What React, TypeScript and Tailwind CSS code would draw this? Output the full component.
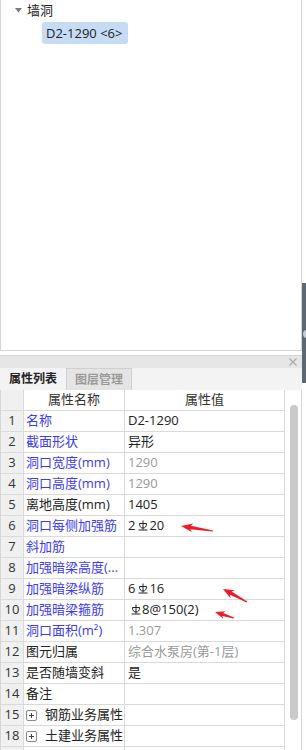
import React from "react";

const FONT = { fontFamily: '"Open Sans", "Noto Sans CJK SC", sans-serif' };

function Rebar() {
  return (
    <svg width="10" height="11" viewBox="0 0 10 11" className="inline-block align-[-1px] ml-[3px] mr-[1px]">
      <g fill="none" stroke="#222" strokeWidth="1">
        <path d="M1.5 3.5 H8.5" />
        <path d="M1.5 3.5 Q1.5 8 5 8 Q8.5 8 8.5 3.5" />
        <path d="M5 0.5 V9.5" />
        <path d="M0.5 10 H9.5" />
      </g>
    </svg>
  );
}

function PlusBox() {
  return (
    <svg width="11" height="11" viewBox="0 0 11 11" className="shrink-0">
      <rect x="0.5" y="0.5" width="10" height="10" rx="1.5" fill="white" stroke="#8a8a8a" />
      <path d="M3 5.5 H8 M5.5 3 V8" stroke="#444" strokeWidth="1" />
    </svg>
  );
}

type Row = {
  n: string;
  name: React.ReactNode;
  blue?: boolean;
  value?: React.ReactNode;
  gray?: boolean;
  plus?: boolean;
};

const rows: Row[] = [
  { n: "1", name: "名称", blue: true, value: "D2-1290" },
  { n: "2", name: "截面形状", blue: true, value: "异形" },
  { n: "3", name: "洞口宽度(mm)", blue: true, value: "1290", gray: true },
  { n: "4", name: "洞口高度(mm)", blue: true, value: "1290", gray: true },
  { n: "5", name: "离地高度(mm)", value: "1405" },
  { n: "6", name: "洞口每侧加强筋", blue: true, value: (<span>2<Rebar />20</span>) },
  { n: "7", name: "斜加筋", blue: true },
  { n: "8", name: "加强暗梁高度(...", blue: true },
  { n: "9", name: "加强暗梁纵筋", blue: true, value: (<span>6<Rebar />16</span>) },
  { n: "10", name: "加强暗梁箍筋", blue: true, value: (<span><Rebar />8@150(2)</span>) },
  { n: "11", name: (<span>洞口面积(m²)</span>), blue: true, value: "1.307", gray: true },
  { n: "12", name: "图元归属", value: "综合水泵房(第-1层)", gray: true },
  { n: "13", name: "是否随墙变斜", value: "是" },
  { n: "14", name: "备注" },
  { n: "15", name: "钢筋业务属性", plus: true },
  { n: "18", name: "土建业务属性", plus: true },
  { n: "", name: "" },
];

function arrowPoints(tip: [number, number], tail: [number, number], headLen: number, headW: number, tailW: number) {
  const dx = tail[0] - tip[0];
  const dy = tail[1] - tip[1];
  const len = Math.hypot(dx, dy);
  const ux = dx / len;
  const uy = dy / len;
  const px = -uy;
  const py = ux;
  const p = (d: number, w: number) => `${(tip[0] + ux * d + px * w).toFixed(2)},${(tip[1] + uy * d + py * w).toFixed(2)}`;
  return [
    p(0, 0),
    p(headLen, headW),
    p(headLen * 0.8, tailW),
    p(len, tailW * 0.35),
    p(len, -tailW * 0.35),
    p(headLen * 0.8, -tailW),
    p(headLen, -headW),
  ].join(" ");
}

export default function App() {
  return (
    <div className="relative w-[306px] h-[750px] overflow-hidden bg-white text-[13px] text-[#222]" style={FONT}>
      {/* Top tree panel */}
      <div className="w-[302px] h-[351px] border-l border-r border-b border-[#d6d6d6]">
        <div className="flex items-center h-[20px] pl-[14px] gap-[5px]">
          <svg width="7" height="5" viewBox="0 0 7 5">
            <path d="M0 0 H7 L3.5 4.5 Z" fill="#7a7a7a" />
          </svg>
          <span className="leading-none">墙洞</span>
        </div>
        <div className="ml-[41px] mt-[2px] w-[86px] h-[22px] rounded-[3px] bg-[#c6dcf4] flex items-center pl-[4px] leading-none">
          D2-1290 &lt;6&gt;
        </div>
      </div>

      <div className="h-[4px]" />

      {/* Bottom property panel */}
      <div className="w-[302px]">
        <div className="h-[13px] bg-[#e6e6e6] border-t border-[#d4d4d4] flex items-center justify-end pr-[5px]">
          <svg width="8" height="8" viewBox="0 0 8 8">
            <path d="M0.5 0.5 L7.5 7.5 M7.5 0.5 L0.5 7.5" stroke="#a8a8a8" strokeWidth="1.1" />
          </svg>
        </div>
        <div className="h-[22px] bg-[#f3f3f3] flex text-[12px]">
          <div className="w-[66px] flex items-center justify-center font-bold text-[#222]">属性列表</div>
          <div className="w-[66px] flex items-center justify-center bg-[#e4e4e4] border-l border-r border-t border-[#cfcfcf] text-[#9a9a9a] font-bold">图层管理</div>
        </div>

        <div className="flex">
          <div className="border-l border-[#d6d6d6]">
            <div className="grid grid-cols-[23px_101px_160px]">
              <div className="h-[21px] bg-[#f0f0f0] border-r border-b border-[#dadada]" />
              <div className="h-[21px] border-r border-b border-[#dadada] flex items-center justify-center text-[#333]">属性名称</div>
              <div className="h-[21px] border-r border-b border-[#dadada] flex items-center justify-center text-[#333]">属性值</div>
              {rows.map((r, i) => (
                <React.Fragment key={i}>
                  <div className="h-[21px] bg-[#f0f0f0] border-r border-b border-[#dadada] flex items-center justify-center text-[#333]">{r.n}</div>
                  <div className={`h-[21px] border-r border-b border-[#dadada] flex items-center pl-[2px] whitespace-nowrap overflow-hidden ${r.blue ? "text-[#3c3cf2]" : "text-[#222]"}`}>
                    {r.plus ? (
                      <span className="flex items-center gap-[8px]"><PlusBox />{r.name}</span>
                    ) : (
                      r.name
                    )}
                  </div>
                  <div className={`h-[21px] border-r border-b border-[#dadada] flex items-center pl-[3px] whitespace-nowrap overflow-hidden ${r.gray ? "text-[#9a9a9a]" : "text-[#222]"}`}>
                    {r.value}
                  </div>
                </React.Fragment>
              ))}
            </div>
          </div>
          <div className="w-[17px] border-r border-[#d6d6d6] pt-[15px] pl-[5px]">
            <div className="w-[8px] h-[315px] rounded-full bg-[#c9c9c9]" />
          </div>
        </div>
      </div>

      {/* Right side dock handle */}
      <div className="absolute left-[302px] top-[283px] w-[4px] h-[100px] bg-[#5d6873]">
        <div className="absolute left-[1px] top-[47px] w-[4px] h-[8px] rounded-l-full bg-[#c8ced4]" />
      </div>

      {/* Red annotation arrows */}
      <svg className="absolute left-0 top-0 pointer-events-none" width="306" height="750" viewBox="0 0 306 750">
        <polygon points={arrowPoints([181, 526], [213, 531], 12, 4.5, 1.8)} fill="#ec1c24" />
        <polygon points={arrowPoints([223, 589], [247, 602], 11, 4.5, 1.8)} fill="#ec1c24" />
        <polygon points={arrowPoints([215, 612], [234, 618], 10, 4, 1.6)} fill="#ec1c24" />
      </svg>
    </div>
  );
}
